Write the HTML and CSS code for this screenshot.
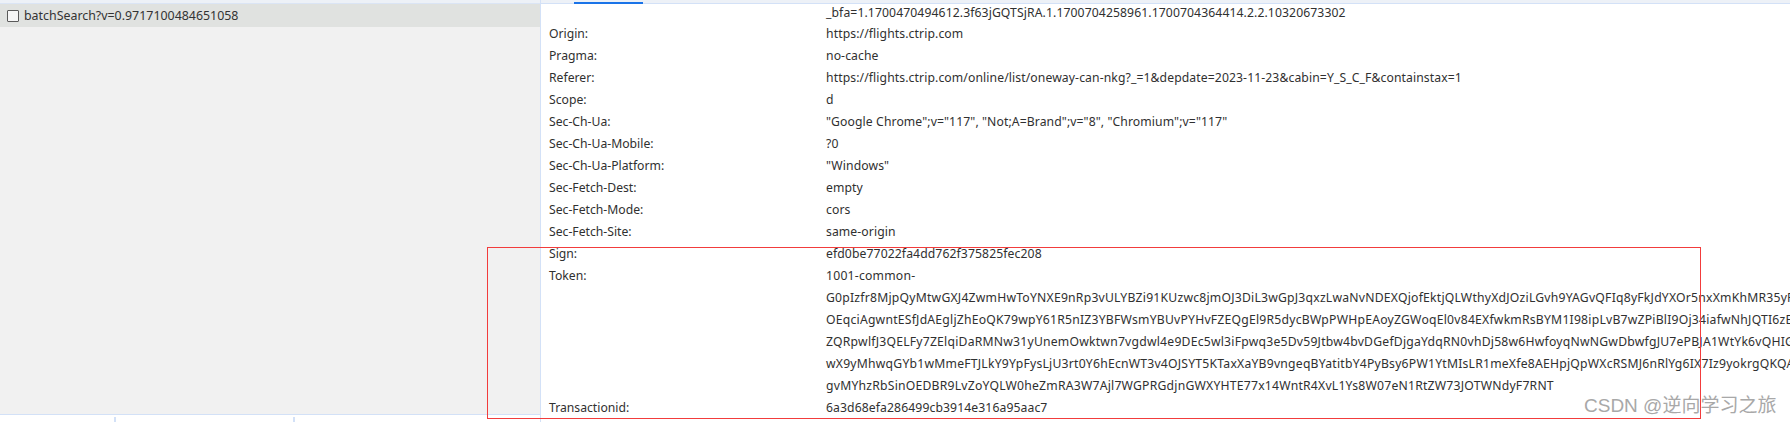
FILE: index.html
```html
<!DOCTYPE html>
<html lang="zh-CN">
<head>
<meta charset="utf-8">
<title>batchSearch</title>
<link rel="stylesheet" href="styles.css">
</head>
<body>
<div class="app">
  <aside class="left">
    <div class="left-top"></div>
    <div class="req-list">
      <div class="req selected"><span class="cb"></span><span class="req-name">batchSearch?v=0.9717100484651058</span></div>
    </div>
    <div class="summary">
      <span class="col c1"></span><span class="col c2"></span><span class="col c3"></span>
    </div>
  </aside>
  <main class="right">
    <div class="tabs"><span class="tab-gap"></span><span class="tab active"></span></div>
    <div class="scroll">
      <div class="headers">
        <div class="row partial"><span class="k"></span><span class="v">_bfa=1.1700470494612.3f63jGQTSjRA.1.1700704258961.1700704364414.2.2.10320673302</span></div>
        <div class="row"><span class="k">Origin:</span><span class="v">https://flights.ctrip.com</span></div>
        <div class="row"><span class="k">Pragma:</span><span class="v">no-cache</span></div>
        <div class="row"><span class="k">Referer:</span><span class="v">https://flights.ctrip.com/online/list/oneway-can-nkg?_=1&amp;depdate=2023-11-23&amp;cabin=Y_S_C_F&amp;containstax=1</span></div>
        <div class="row"><span class="k">Scope:</span><span class="v">d</span></div>
        <div class="row"><span class="k">Sec-Ch-Ua:</span><span class="v">"Google Chrome";v="117", "Not;A=Brand";v="8", "Chromium";v="117"</span></div>
        <div class="row"><span class="k">Sec-Ch-Ua-Mobile:</span><span class="v">?0</span></div>
        <div class="row"><span class="k">Sec-Ch-Ua-Platform:</span><span class="v">"Windows"</span></div>
        <div class="row"><span class="k">Sec-Fetch-Dest:</span><span class="v">empty</span></div>
        <div class="row"><span class="k">Sec-Fetch-Mode:</span><span class="v">cors</span></div>
        <div class="row"><span class="k">Sec-Fetch-Site:</span><span class="v">same-origin</span></div>
        <div class="row"><span class="k">Sign:</span><span class="v">efd0be77022fa4dd762f375825fec208</span></div>
        <div class="row"><span class="k">Token:</span>
          <div class="v multi">
            <div>1001-common-</div>
            <div>G0pIzfr8MjpQyMtwGXJ4ZwmHwToYNXE9nRp3vULYBZi91KUzwc8jmOJ3DiL3wGpJ3qxzLwaNvNDEXQjofEktjQLWthyXdJOziLGvh9YAGvQFIq8yFkJdYXOr5nxXmKhMR35yP</div>
            <div>OEqciAgwntESfJdAEgljZhEoQK79wpY61R5nIZ3YBFWsmYBUvPYHvFZEQgEl9R5dycBWpPWHpEAoyZGWoqEl0v84EXfwkmRsBYM1I98ipLvB7wZPiBlI9Oj34iafwNhJQTI6zEC</div>
            <div>ZQRpwlfJ3QELFy7ZElqiDaRMNw31yUnemOwktwn7vgdwl4e9DEc5wl3iFpwq3e5Dv59Jtbw4bvDGefDjgaYdqRN0vhDj58w6HwfoyqNwNGwDbwfgJU7ePBJA1WtYk6vQHIG</div>
            <div>wX9yMhwqGYb1wMmeFTJLkY9YpFysLjU3rt0Y6hEcnWT3v4OJSYT5KTaxXaYB9vngeqBYatitbY4PyBsy6PW1YtMIsLR1meXfe8AEHpjQpWXcRSMJ6nRlYg6IX7Iz9yokrgQKQA</div>
            <div>gvMYhzRbSinOEDBR9LvZoYQLW0heZmRA3W7Ajl7WGPRGdjnGWXYHTE77x14WntR4XvL1Ys8W07eN1RtZW73JOTWNdyF7RNT</div>
          </div>
        </div>
        <div class="row"><span class="k">Transactionid:</span><span class="v">6a3d68efa286499cb3914e316a95aac7</span></div>
      </div>
    </div>
  </main>
</div>
<div class="annot"></div>
<div class="watermark">CSDN @逆向学习之旅</div>
</body>
</html>
```
FILE: styles.css
```css
html, body {
  margin: 0;
  padding: 0;
}
body {
  width: 1790px;
  height: 422px;
  overflow: hidden;
  position: relative;
  background: #ffffff;
  font-family: "Noto Sans", "Open Sans", "Noto Sans CJK SC", sans-serif;
  font-size: 12.2px;
  color: #303030;
}
.app {
  display: flex;
  height: 422px;
}
.left {
  width: 540px;
  flex: none;
  border-right: 1px solid #d3e1f7;
  display: flex;
  flex-direction: column;
  background: #f1f1f1;
}
.left-top {
  height: 3px;
  background: #edf1f7;
  border-bottom: 1px solid #dbe5f5;
}
.req-list {
  height: 410px;
}
.req {
  height: 23px;
  display: flex;
  align-items: center;
  padding-left: 7px;
  font-size: 12.4px;
}
.req.selected {
  background: #e0e2e0;
}
.cb {
  width: 10px;
  height: 10px;
  border: 1px solid #5a5a5a;
  border-radius: 1px;
  margin-right: 5px;
  background: #f6f6f6;
}
.req-name {
  color: #333;
}
.summary {
  flex: 1;
  background: #fff;
  border-top: 1px solid #d3e1f7;
  display: flex;
}
.col {
  height: 100%;
  border-right: 2px solid #d3e1f7;
  margin-top: 2px;
}
.c1 { width: 114px; }
.c2 { width: 177px; }
.c3 { width: 0; border: 0; }
.right {
  flex: 1;
  min-width: 0;
  display: flex;
  flex-direction: column;
  overflow: hidden;
}
.tabs {
  height: 3px;
  flex: none;
  background: #edf1f7;
  border-bottom: 1px solid #d3e1f7;
  display: flex;
}
.tab-gap { width: 33px; }
.tab.active {
  width: 69px;
  border-bottom: 2px solid #1a73e8;
  height: 2px;
}
.scroll {
  flex: 1;
  overflow: hidden;
}
.headers {
  padding-left: 8px;
  padding-top: 1px;
}
.row {
  display: flex;
  line-height: 22px;
  white-space: nowrap;
}
.row.partial {
  line-height: 16px;
  margin-bottom: 2px;
}
.k {
  width: 277px;
  flex: none;
}
.v {
  flex: none;
  letter-spacing: 0.1px;
}
.v.multi {
  letter-spacing: 0.22px;
}
.annot {
  position: absolute;
  left: 487px;
  top: 247px;
  width: 1212px;
  height: 170px;
  border: 1px solid #f23c3c;
}
.watermark {
  position: absolute;
  left: 1584px;
  top: 390px;
  font-family: "Liberation Sans", "Noto Sans CJK SC", sans-serif;
  font-size: 19px;
  color: #a8a8a8;
  white-space: nowrap;
  text-shadow: 0 0 1px #fff;
}
```
